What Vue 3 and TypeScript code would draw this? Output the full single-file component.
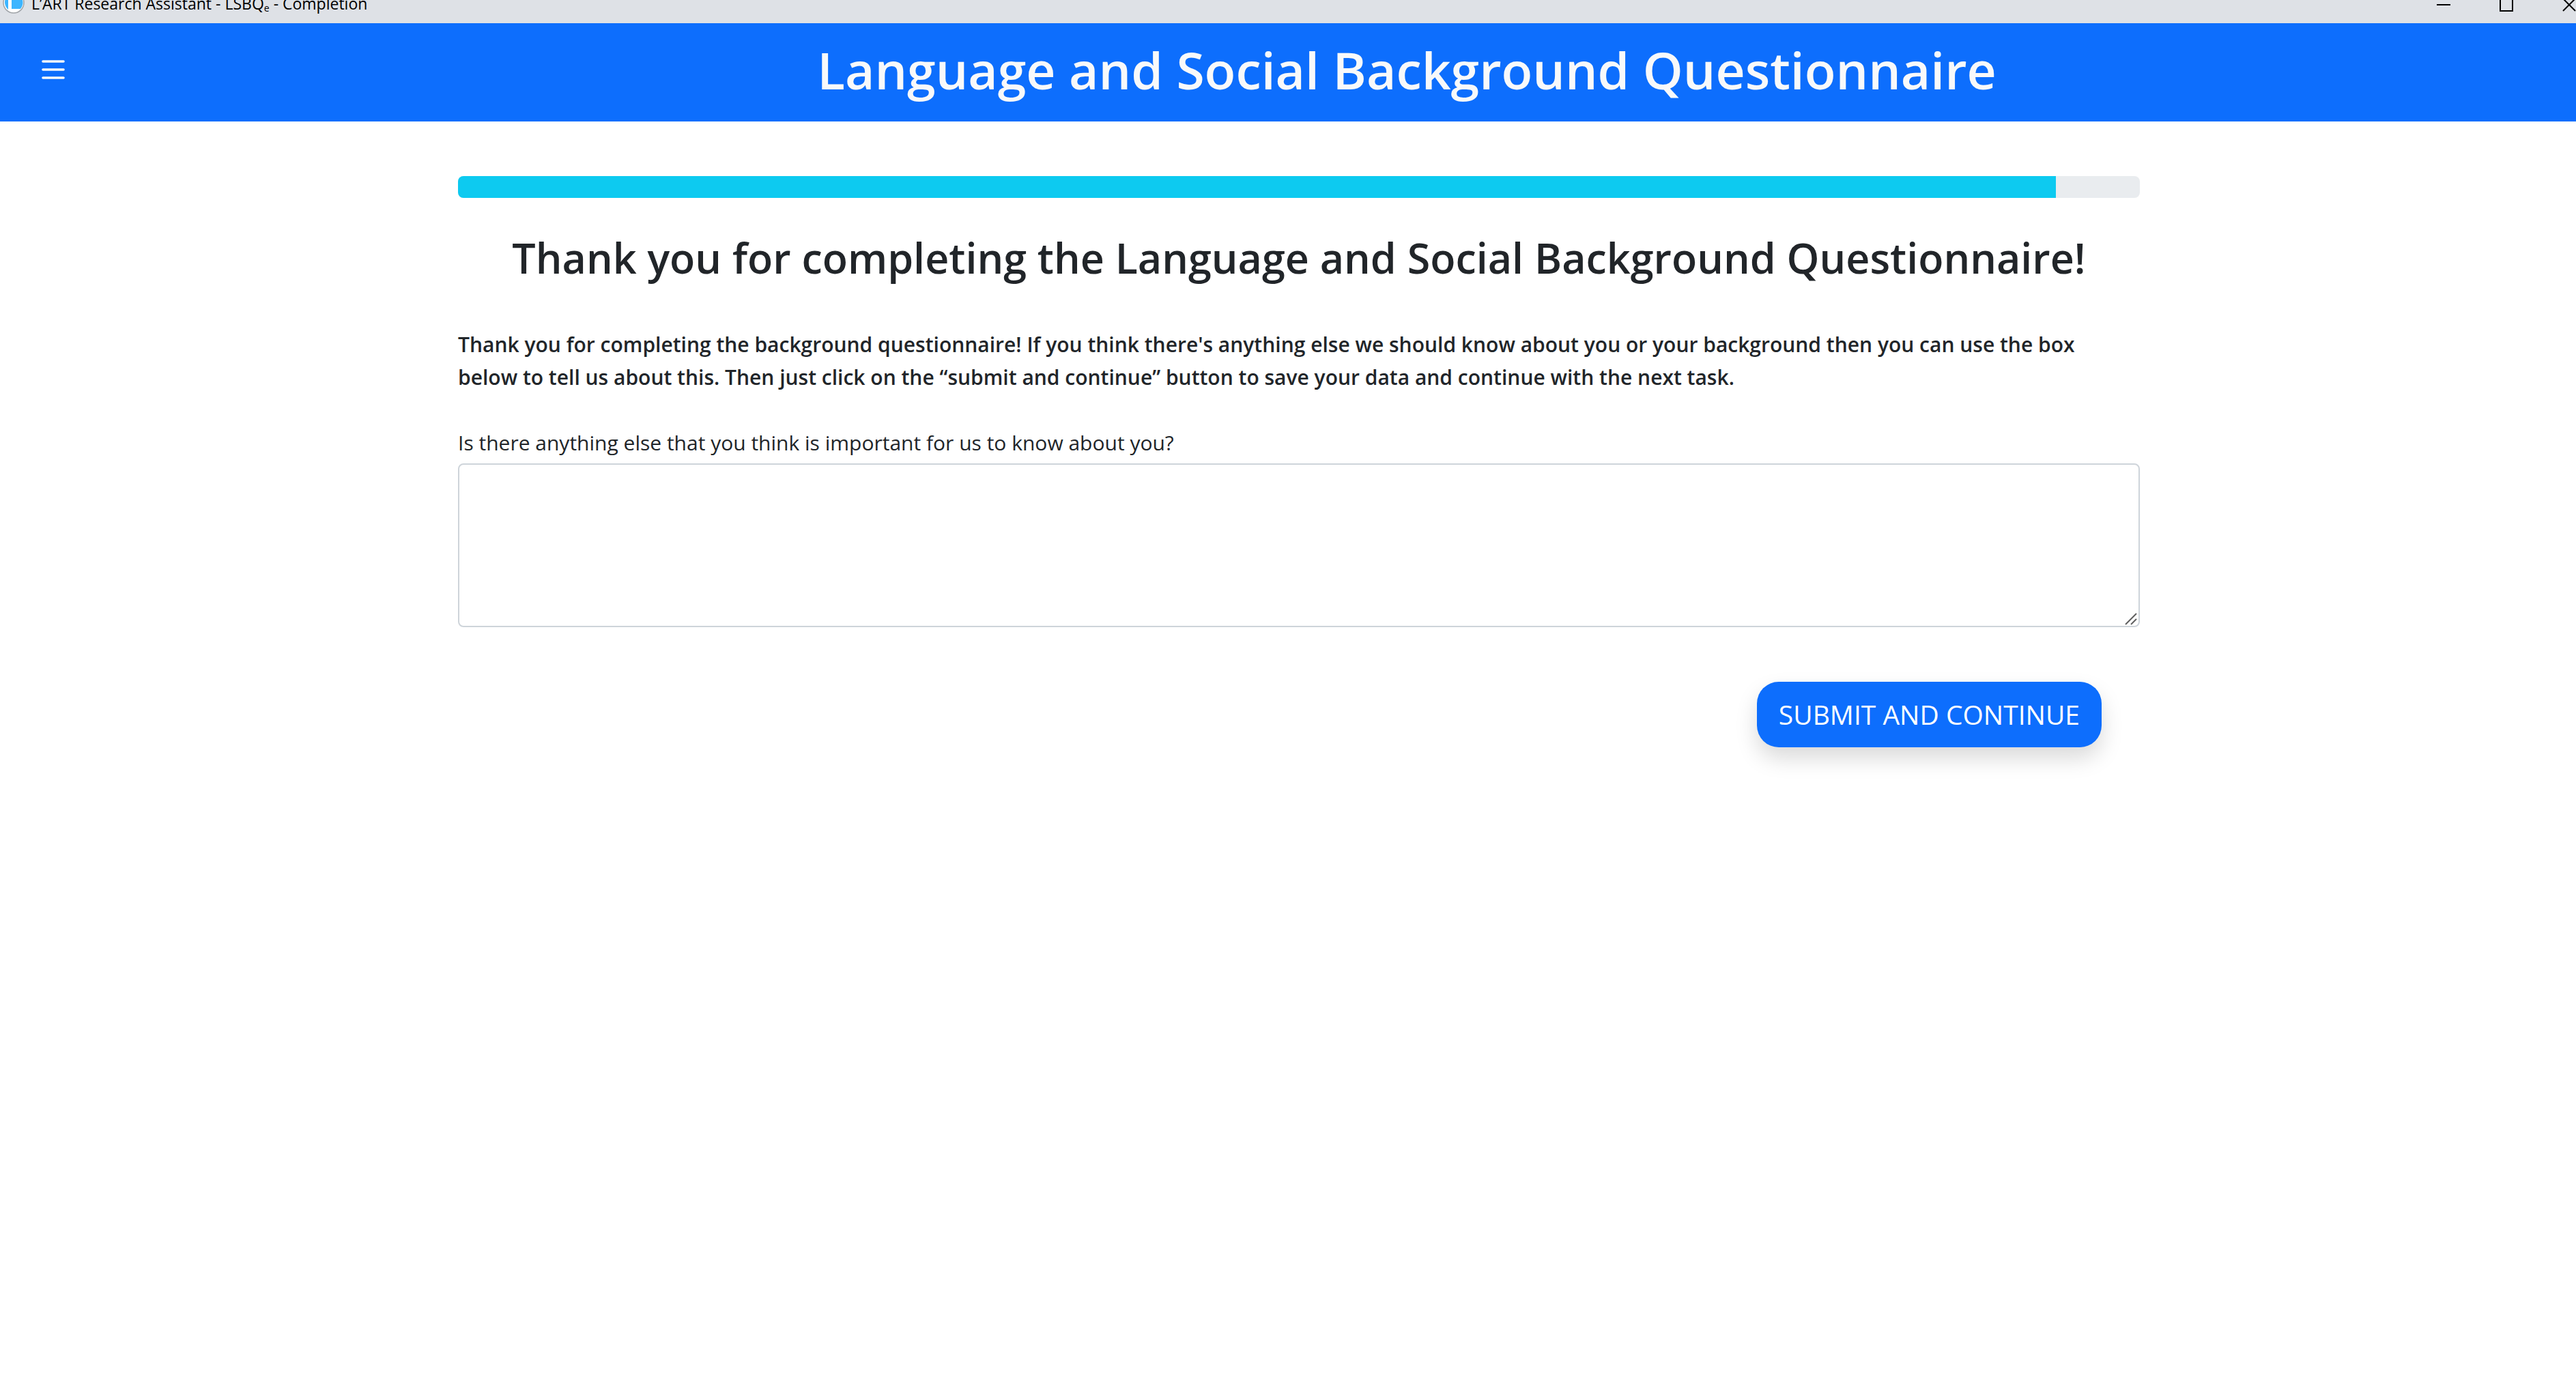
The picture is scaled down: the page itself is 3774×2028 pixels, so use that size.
<script setup lang="ts">
import { ref } from 'vue'

const progress = ref(95)
const comments = ref('')
</script>

<template>
  <div class="window">
    <div class="titlebar">
      <div class="titlebar-row">
        <svg class="app-icon" width="32" height="54" viewBox="0 0 32 54" aria-hidden="true">
          <circle cx="16" cy="24" r="15" fill="#fff" stroke="#a0a4a8" stroke-width="1.5" />
          <path d="M8 13A13.500 13.500 0 0 0 8 34ZM13 11H20A13.500 13.500 0 0 1 26 33H13Z" fill="#3db5ff" />
        </svg>
        <span class="titlebar-text">L’ART Research Assistant - LSBQ<sub>e</sub> - Completion</span>
        <div class="controls">
          <button type="button" aria-label="Minimize">
            <svg width="20" height="22" viewBox="0 0 20 22"><path d="M0 11H20" stroke="#000" stroke-width="2" /></svg>
          </button>
          <button type="button" aria-label="Maximize">
            <svg width="20" height="22" viewBox="0 0 20 22"><path d="M1 2H19V20H1Z" fill="none" stroke="#000" stroke-width="2" /></svg>
          </button>
          <button type="button" aria-label="Close">
            <svg width="20" height="22" viewBox="0 0 20 22"><path d="M1 2L19 20M19 2L1 20" stroke="#000" stroke-width="2" /></svg>
          </button>
        </div>
      </div>
    </div>

    <header class="navbar">
      <button type="button" class="menu" aria-label="Menu">
        <svg width="48" height="48" viewBox="0 0 16 16" fill="none" stroke="#f8f9fa" stroke-width="1.2" stroke-linecap="round">
          <path d="M3 4H13M3 8H13M3 12H13" />
        </svg>
      </button>
      <h1>Language and Social Background Questionnaire</h1>
    </header>

    <main>
      <div class="progress" role="progressbar" :aria-valuenow="progress" aria-valuemin="0" aria-valuemax="100" aria-label="Progress">
        <div class="progress-bar" :style="{ width: progress + '%' }"></div>
      </div>
      <h2>Thank you for completing the Language and Social Background Questionnaire!</h2>
      <p>
        Thank you for completing the background questionnaire! If you think there's anything else we should know about you or your background then you can use the box below to tell us about this. Then just click on the “submit and continue” button to save your data and continue with the next task.
      </p>
      <form @submit.prevent>
        <label for="comments">Is there anything else that you think is important for us to know about you?</label>
        <div class="field">
          <textarea id="comments" v-model="comments"></textarea>
          <svg class="grip" width="18" height="18" viewBox="0 0 18 18" aria-hidden="true">
            <path d="M1 17L17 1M9 17L17 9" stroke="#606060" stroke-width="2" />
          </svg>
        </div>
        <div class="actions">
          <button type="submit" class="submit">SUBMIT AND CONTINUE</button>
        </div>
      </form>
    </main>
  </div>
</template>

<style>
body {
  background: #fff;
}
</style>

<style scoped>
.window {
  min-height: 100vh;
  font-family: "Open Sans", "Noto Sans", sans-serif;
  font-size: 30px;
  line-height: 48px;
  color: #212529;
}
button {
  border: 0;
  padding: 0;
  font: inherit;
  background: none;
}
svg {
  display: block;
}
.titlebar {
  display: flex;
  align-items: flex-end;
  height: 34px;
  overflow: hidden;
  background: #dee1e6;
}
.titlebar-row {
  display: flex;
  flex: 1;
  align-items: center;
  height: 54px;
  padding-left: 4px;
}
.titlebar-text {
  margin-left: 10px;
  padding-bottom: 4px;
  font-size: 23px;
  line-height: 48px;
  color: #000;
  white-space: nowrap;
}
.titlebar-text sub {
  font-size: 14px;
  line-height: 0;
  vertical-align: -3px;
}
.controls {
  display: flex;
  gap: 72px;
  margin-left: auto;
}
.navbar {
  box-sizing: border-box;
  display: flex;
  align-items: center;
  height: 144px;
  padding-bottom: 8px;
  background: #0d6efd;
}
.menu {
  margin-left: 54px;
}
h1 {
  flex: 1;
  margin: 0 0 0 246px;
  font-size: 75px;
  font-weight: 600;
  line-height: 96px;
  text-align: center;
  color: #f8f9fa;
}
main {
  max-width: 2464px;
  margin: 80px auto 0;
  position: relative;
  left: 16px;
}
.progress {
  height: 32px;
  overflow: hidden;
  border-radius: 8px;
  background: #e9ecef;
}
.progress-bar {
  height: 100%;
  background: #0dcaf0;
}
h2 {
  margin: 48px 0 0;
  font-size: 61px;
  font-weight: 600;
  line-height: 80px;
  text-align: center;
}
p {
  margin: 63px 0 48px;
  padding-right: 48px;
  font-weight: 600;
}
label {
  display: block;
  margin-bottom: 6px;
}
.field {
  position: relative;
}
textarea {
  display: block;
  box-sizing: border-box;
  width: 100%;
  height: 240px;
  padding: 12px 24px;
  border: 2px solid #ced4da;
  border-radius: 8px;
  font: inherit;
  color: inherit;
  background: #fff;
  resize: vertical;
}
textarea::-webkit-resizer {
  background: transparent;
}
.grip {
  position: absolute;
  right: 4px;
  bottom: 3px;
  pointer-events: none;
}
.actions {
  display: flex;
  justify-content: flex-end;
  margin-top: 80px;
  padding-right: 56px;
}
.submit {
  padding: 0 32px;
  border-radius: 32px;
  font-size: 39px;
  line-height: 96px;
  color: #fff;
  background: #0d6efd;
  box-shadow: 0 16px 32px rgba(0, 0, 0, 0.15);
}
</style>
